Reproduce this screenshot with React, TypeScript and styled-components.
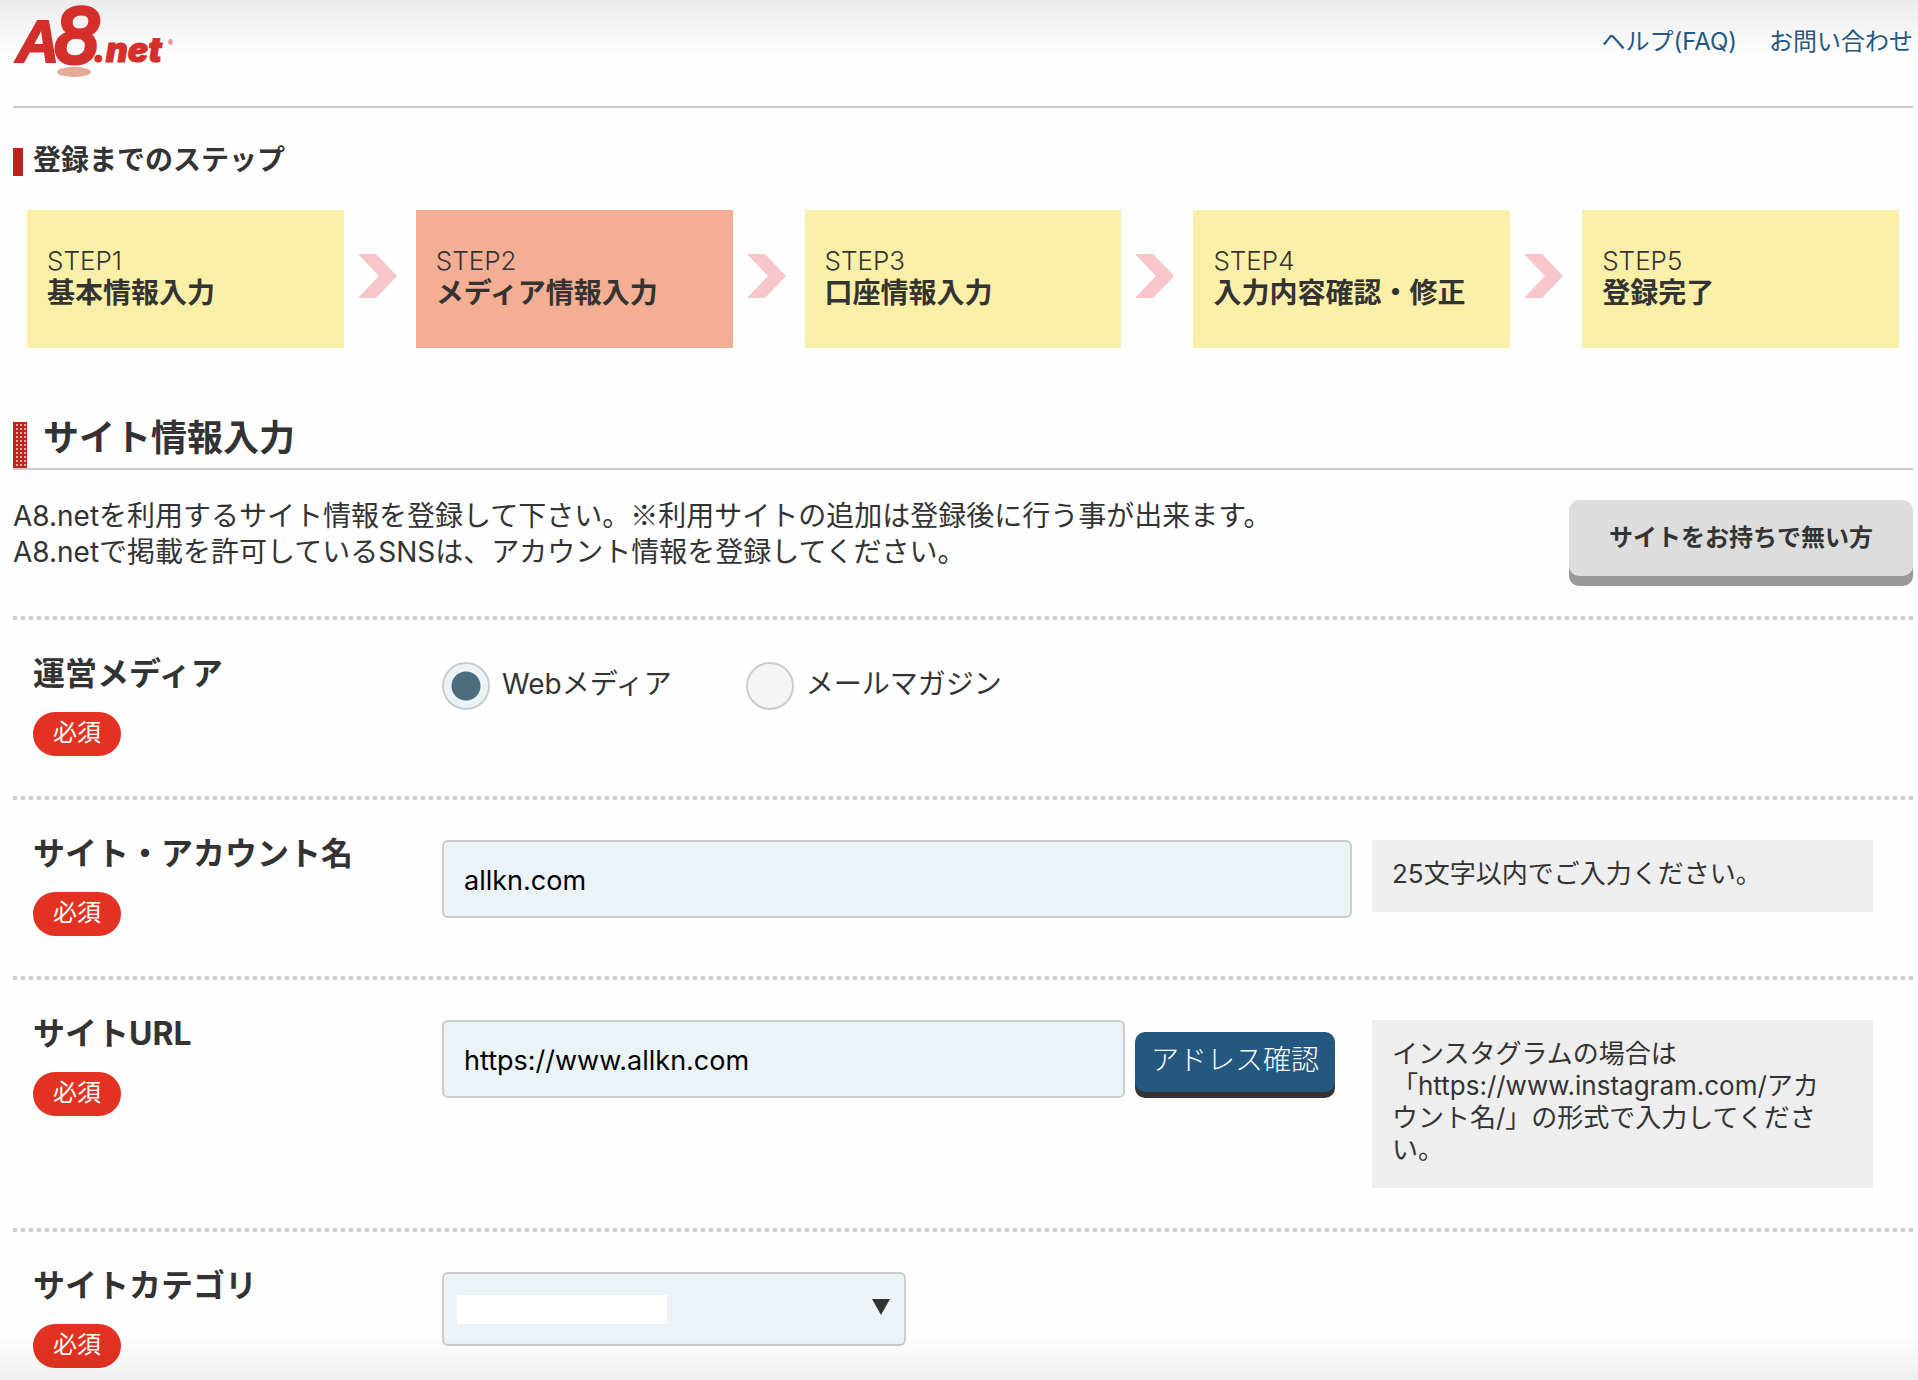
import React, { useState } from "react";
import styled, { createGlobalStyle } from "styled-components";

const GlobalStyle = createGlobalStyle`
  *, *::before, *::after { box-sizing: border-box; }
  body {
    margin: 0;
    background: #fefefe linear-gradient(#ebebeb, #fefefe 56px) no-repeat;
    color: #333;
    font-family: Inter, "Noto Sans CJK JP", sans-serif;
    font-size: 28px;
    line-height: 36px;
  }
  h1, h2, p, ol { margin: 0; padding: 0; }
  button, input, select { font-family: inherit; margin: 0; }
`;

const Page = styled.div`
  padding: 0 5px 0 13px;
`;

const Header = styled.header`
  display: flex;
  justify-content: space-between;
  align-items: flex-start;
  height: 108px;
  border-bottom: 2px solid #ccc;
`;

const LogoLink = styled.a`
  display: block;
  line-height: 0;
`;

const LogoDrawing = styled.svg`
  overflow: visible;
`;

const Nav = styled.nav`
  display: flex;
  gap: 32px;
  padding-top: 24px;
`;

const NavLink = styled.a`
  color: #24587f;
  font-size: 24px;
  text-decoration: none;
`;

const StepsHeading = styled.h2`
  margin-top: 40px;
  padding-left: 10px;
  border-left: 10px solid #bb261a;
  font-size: 28px;
  line-height: 28px;
  height: 28px;
  display: flex;
  align-items: flex-end;
  padding-bottom: 2px;
`;

const Steps = styled.ol`
  display: flex;
  align-items: center;
  list-style: none;
  margin-top: 34px;
  padding: 0 14px;
`;

const Step = styled.li<{ $current: boolean }>`
  flex: 1 1 0;
  height: 138px;
  padding: 35px 20px;
  background: ${(p) => (p.$current ? "#f3ae93" : "#faefa7")};
  line-height: 32px;
`;

const StepNumber = styled.div`
  font-size: 26px;
  font-weight: 300;
`;

const StepName = styled.div`
  font-size: 28px;
  font-weight: 700;
  white-space: nowrap;
`;

const StepArrow = styled.li`
  flex: 0 0 72px;
  display: flex;
  justify-content: center;
  padding: 0 4px 6px 0;
`;

const ArrowDrawing = styled.svg`
  display: block;
`;

const SectionHeading = styled.h1`
  display: flex;
  gap: 16px;
  height: 58px;
  margin-top: 64px;
  border-bottom: 2px solid #ccc;
  font-size: 36px;
  line-height: 52px;

  &::before {
    content: "";
    width: 14px;
    margin-top: 10px;
    background:
      linear-gradient(90deg, transparent 50%, #bb261a 50%) 2px 0 / 4px 4px,
      linear-gradient(#bb261a 50%, #e8aaa4 50%) 0 0 / 4px 4px;
    border-left: 1px solid #bb261a;
    border-right: 1px solid #bb261a;
  }
`;

const Intro = styled.div`
  display: flex;
  justify-content: space-between;
  align-items: flex-start;
  height: 146px;
  padding-top: 28px;
`;

const ReferenceMark = styled.span`
  font-family: "Noto Sans CJK JP", sans-serif;
  line-height: 1;
`;

const NoSiteButton = styled.button`
  width: 344px;
  height: 76px;
  margin-top: 2px;
  padding: 0 0 6px;
  border: 0;
  border-radius: 10px;
  background: #ddd;
  box-shadow: 0 10px 0 #999;
  color: #333;
  font-size: 24px;
  font-weight: 700;
`;

const Row = styled.div`
  display: grid;
  grid-template-columns: 389fr 910fr 501fr;
  gap: 20px;
  align-items: start;
  padding: 44px 40px 40px 20px;
  background: repeating-linear-gradient(90deg, #ccc 0 4px, transparent 4px 8px) top / 100% 4px no-repeat;

  &:last-child { padding-bottom: 12px; }
`;

const LabelCell = styled.div`
  display: flex;
  flex-direction: column;
  align-items: flex-start;
  gap: 24px;
`;

const FieldLabel = styled.label`
  font-size: 32px;
  font-weight: 700;
  line-height: 28px;
  white-space: nowrap;
`;

const Required = styled.span`
  height: 44px;
  padding: 0 20px;
  border-radius: 22px;
  background: #e43222;
  color: #fff;
  font-size: 24px;
  line-height: 42px;
`;

const Radios = styled.div`
  display: flex;
  gap: 74px;
  padding-top: 2px;
`;

const RadioLabel = styled.label`
  display: flex;
  align-items: center;
  gap: 12px;
  line-height: 44px;
`;

const Radio = styled.input`
  appearance: none;
  width: 48px;
  height: 48px;
  border: 2px solid #ccc;
  border-radius: 50%;
  background: #f5f5f5;

  &:checked {
    background: radial-gradient(circle, #4d6c7d 14px, #ebf3f6 15px);
  }
`;

const RadioText = styled.span`
  padding-bottom: 4px;
`;

const TextInput = styled.input`
  flex: 1;
  min-width: 0;
  width: 100%;
  height: 78px;
  padding: 2px 20px 0;
  border: 2px solid #ccc;
  border-radius: 6px;
  background: #ebf3f6;
  color: #000;
  font-size: 27px;
`;

const UrlFields = styled.div`
  display: flex;
  align-items: flex-start;
  gap: 10px;
  padding-right: 17px;
`;

const CheckButton = styled.button`
  width: 200px;
  height: 60px;
  margin-top: 12px;
  padding: 0 0 8px;
  border: 0;
  border-radius: 10px;
  background: #24587f;
  box-shadow: 0 6px 0 #333;
  color: #fff;
  font-size: 28px;
  font-weight: 300;
  white-space: nowrap;
`;

const Hint = styled.p`
  && { padding: 18px 32px 22px 20px; }
  background: #eee;
  font-size: 26px;
  line-height: 32px;
`;

const SelectBox = styled.div`
  position: relative;
  width: 51%;

  &::before {
    content: "";
    position: absolute;
    left: 15px;
    top: 23px;
    width: 210px;
    height: 29px;
    background: #fff;
    pointer-events: none;
  }
`;

const CategorySelect = styled.select`
  appearance: none;
  display: block;
  width: 100%;
  height: 74px;
  padding: 0 48px 0 20px;
  border: 2px solid #ccc;
  border-radius: 6px;
  background: #ebf3f6;
  color: #000;
  font-size: 27px;
`;

const SelectArrow = styled.svg`
  position: absolute;
  right: 16px;
  top: 27px;
  pointer-events: none;
`;

const BottomFade = styled.div`
  position: fixed;
  left: 0;
  right: 0;
  bottom: 0;
  height: 44px;
  background: linear-gradient(transparent, rgba(0, 0, 0, 0.06));
  pointer-events: none;
`;

const steps = ["基本情報入力", "メディア情報入力", "口座情報入力", "入力内容確認・修正", "登録完了"];

function Logo() {
  return (
    <LogoDrawing width="166" height="80" viewBox="0 0 166 80" role="img" aria-label="A8.net">
      <ellipse cx="61" cy="72" rx="17" ry="5" fill="#e8a896" />
      <text y="62" fill="#d42f2a" stroke="#d42f2a" fontStyle="italic" fontFamily="Liberation Sans">
        <tspan x="3" fontSize="60" fontWeight="700" strokeWidth="2">A</tspan>
        <tspan x="42" fontSize="78" fontWeight="400" strokeWidth="5" style={{ fontSynthesis: "none" }}>8</tspan>
        <tspan x="80" fontSize="34" fontFamily="Inter" fontWeight="900" strokeWidth="1">.net</tspan>
      </text>
      <text x="155" y="45" fill="#d42f2a" fontFamily="Liberation Sans" fontSize="7" fontWeight="700">®</text>
    </LogoDrawing>
  );
}

function Arrow() {
  return (
    <ArrowDrawing width="40" height="44" viewBox="0 0 40 44" aria-hidden="true">
      <path d="M0 0H18L39 22L18 44H0L21 22Z" fill="#f7c5ca" />
    </ArrowDrawing>
  );
}

export default function App() {
  const [media, setMedia] = useState("web");
  const [name, setName] = useState("allkn.com");
  const [url, setUrl] = useState("https://www.allkn.com");

  return (
    <>
      <GlobalStyle />
      <Page>
        <Header>
          <LogoLink href="#top"><Logo /></LogoLink>
          <Nav>
            <NavLink href="#help">ヘルプ(FAQ)</NavLink>
            <NavLink href="#contact">お問い合わせ</NavLink>
          </Nav>
        </Header>
        <main>
          <StepsHeading>登録までのステップ</StepsHeading>
          <Steps>
            {steps.map((step, i) => (
              <React.Fragment key={step}>
                {i > 0 && <StepArrow aria-hidden="true"><Arrow /></StepArrow>}
                <Step $current={i === 1}>
                  <StepNumber>STEP{i + 1}</StepNumber>
                  <StepName>{step}</StepName>
                </Step>
              </React.Fragment>
            ))}
          </Steps>
          <SectionHeading>サイト情報入力</SectionHeading>
          <Intro>
            <p>
              A8.netを利用するサイト情報を登録して下さい。<ReferenceMark>※</ReferenceMark>利用サイトの追加は登録後に行う事が出来ます。
              <br />
              A8.netで掲載を許可しているSNSは、アカウント情報を登録してください。
            </p>
            <NoSiteButton type="button">サイトをお持ちで無い方</NoSiteButton>
          </Intro>
          <form>
            <Row role="radiogroup" aria-labelledby="media-label">
              <LabelCell>
                <FieldLabel as="span" id="media-label">運営メディア</FieldLabel>
                <Required>必須</Required>
              </LabelCell>
              <Radios>
                <RadioLabel>
                  <Radio type="radio" name="media" checked={media === "web"} onChange={() => setMedia("web")} />
                  <RadioText>Webメディア</RadioText>
                </RadioLabel>
                <RadioLabel>
                  <Radio type="radio" name="media" checked={media === "mail"} onChange={() => setMedia("mail")} />
                  <RadioText>メールマガジン</RadioText>
                </RadioLabel>
              </Radios>
            </Row>
            <Row>
              <LabelCell>
                <FieldLabel htmlFor="site-name">サイト・アカウント名</FieldLabel>
                <Required>必須</Required>
              </LabelCell>
              <TextInput id="site-name" type="text" value={name} onChange={(e) => setName(e.target.value)} />
              <Hint>25文字以内でご入力ください。</Hint>
            </Row>
            <Row>
              <LabelCell>
                <FieldLabel htmlFor="site-url">サイトURL</FieldLabel>
                <Required>必須</Required>
              </LabelCell>
              <UrlFields>
                <TextInput id="site-url" type="text" value={url} onChange={(e) => setUrl(e.target.value)} />
                <CheckButton type="button">アドレス確認</CheckButton>
              </UrlFields>
              <Hint>インスタグラムの場合は「https://www.instagram.com/アカウント名/」の形式で入力してください。</Hint>
            </Row>
            <Row>
              <LabelCell>
                <FieldLabel htmlFor="site-category">サイトカテゴリ</FieldLabel>
                <Required>必須</Required>
              </LabelCell>
              <SelectBox>
                <CategorySelect id="site-category"><option value=""></option></CategorySelect>
                <SelectArrow width="18" height="16" viewBox="0 0 18 16" aria-hidden="true">
                  <path d="M0 0H18L9 16Z" fill="#333" />
                </SelectArrow>
              </SelectBox>
            </Row>
          </form>
        </main>
      </Page>
      <BottomFade />
    </>
  );
}
